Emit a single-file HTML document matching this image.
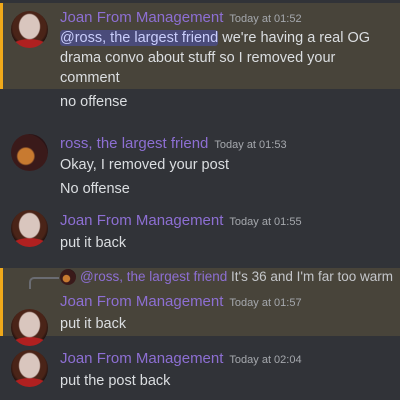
<html><head><style>
body{margin:0;width:400px;height:400px;background:#313338;font-family:"Liberation Sans",sans-serif;overflow:hidden;position:relative;color:#dbdee1}
.a{position:absolute;left:11px;width:37px;height:37px;border-radius:50%;background:radial-gradient(ellipse 30% 36% at 50% 42%,#d9c6be 0 90%,transparent 100%),radial-gradient(ellipse 50% 20% at 50% 95%,#b02020 0 90%,transparent 100%),radial-gradient(circle at 50% 45%,#4a2418 0 60%,#24120e 70%);}
.r{background:radial-gradient(circle at 40% 60%,#c87a30 0 25%,#3a1a1a 30% 70%,#2a1416 71%)}
.t{position:absolute;left:60px;font-size:14.5px;line-height:20px;white-space:nowrap}
.n{color:#8d6fd3;font-size:15px;font-weight:500}
.ts{color:#a5a8ad;font-size:11px;margin-left:6px}
.hl{position:absolute;left:0;width:400px;background:#48443a;border-left:3px solid #f0a91a;box-sizing:border-box}
.m{background:#4a4b7a;color:#c9cdfb;border-radius:3px}
</style></head><body>
<div class="hl" style="top:3px;height:86px"></div>
<div class="a" style="top:11px"></div>
<div class="t" style="top:8px"><span class="n">Joan From Management</span><span class="ts">Today at 01:52</span></div>
<div class="t" style="top:28px;line-height:20px;white-space:normal;width:335px"><span class="m">@ross, the largest friend</span> we're having a real OG drama convo about stuff so I removed your comment</div>
<div class="t" style="top:92px">no offense</div>
<div class="a r" style="top:134px"></div>
<div class="t" style="top:134px"><span class="n">ross, the largest friend</span><span class="ts">Today at 01:53</span></div>
<div class="t" style="top:155px">Okay, I removed your post</div>
<div class="t" style="top:179px">No offense</div>
<div class="a" style="top:210px"></div>
<div class="t" style="top:211px"><span class="n">Joan From Management</span><span class="ts">Today at 01:55</span></div>
<div class="t" style="top:233px">put it back</div>
<div class="hl" style="top:268px;height:68px"></div>
<div style="position:absolute;left:29px;top:277px;width:28px;height:10px;border-left:2px solid #6a6c72;border-top:2px solid #6a6c72;border-top-left-radius:5px"></div>
<div class="a r" style="top:269px;left:60px;width:16px;height:16px"></div>
<div class="t" style="top:267px;left:80px;font-size:13.5px"><span style="color:#8d6fd3">@ross, the largest friend</span> <span style="color:#c4c6ca">It's 36 and I'm far too warm</span></div>
<div class="a" style="top:309px"></div>
<div class="t" style="top:292px"><span class="n">Joan From Management</span><span class="ts">Today at 01:57</span></div>
<div class="t" style="top:314px">put it back</div>
<div class="a" style="top:350px"></div>
<div class="t" style="top:349px"><span class="n">Joan From Management</span><span class="ts">Today at 02:04</span></div>
<div class="t" style="top:371px">put the post back</div>
</body></html>
